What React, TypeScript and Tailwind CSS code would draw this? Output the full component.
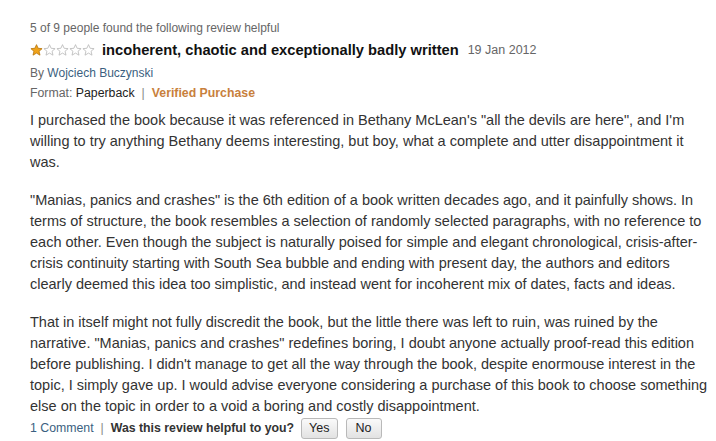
import React from 'react';

function Star({ filled }: { filled: boolean }) {
  return (
    <svg width="13" height="12" viewBox="0 0 24 23" className="block">
      <path
        d="M12 1.2l3.1 7 7.6.7-5.8 5 1.8 7.5L12 17.4l-6.7 4 1.8-7.5-5.8-5 7.6-.7z"
        fill={filled ? '#f0a31a' : '#fff'}
        stroke={filled ? '#b8770f' : '#b9b9b9'}
        strokeWidth="1.6"
        strokeLinejoin="round"
      />
    </svg>
  );
}

const paragraphs = [
  [
    'I purchased the book because it was referenced in Bethany McLean\'s "all the devils are here", and I\'m',
    'willing to try anything Bethany deems interesting, but boy, what a complete and utter disappointment it',
    'was.',
  ],
  [
    '"Manias, panics and crashes" is the 6th edition of a book written decades ago, and it painfully shows. In',
    'terms of structure, the book resembles a selection of randomly selected paragraphs, with no reference to',
    'each other. Even though the subject is naturally poised for simple and elegant chronological, crisis-after-',
    'crisis continuity starting with South Sea bubble and ending with present day, the authors and editors',
    'clearly deemed this idea too simplistic, and instead went for incoherent mix of dates, facts and ideas.',
  ],
  [
    'That in itself might not fully discredit the book, but the little there was left to ruin, was ruined by the',
    'narrative. "Manias, panics and crashes" redefines boring, I doubt anyone actually proof-read this edition',
    "before publishing. I didn't manage to get all the way through the book, despite enormouse interest in the",
    'topic, I simply gave up. I would advise everyone considering a purchase of this book to choose something',
    'else on the topic in order to a void a boring and costly disappointment.',
  ],
];

export default function App() {
  return (
    <div
      className="min-h-[441px] w-[716px] bg-white px-[30px] pt-[20px] text-[#333]"
      style={{ fontFamily: '"Liberation Sans", Arial, sans-serif' }}
    >
      <div className="text-[12px] leading-[16px] text-[#666]">5 of 9 people found the following review helpful</div>

      <div className="mt-[5px] flex items-center">
        <div className="flex">
          <Star filled />
          <Star filled={false} />
          <Star filled={false} />
          <Star filled={false} />
          <Star filled={false} />
        </div>
        <span className="ml-[7px] text-[14.7px] font-bold leading-[18px] text-[#111]">
          incoherent, chaotic and exceptionally badly written
        </span>
        <span className="ml-[9px] text-[12.5px] text-[#666]">19 Jan 2012</span>
      </div>

      <div className="mt-[5px] text-[12px] leading-[16px] text-[#666]">
        By <span className="text-[#3b5f80]">Wojciech Buczynski</span>
      </div>

      <div className="mt-[4px] text-[12.3px] leading-[16px] text-[#666]">
        Format: <span className="text-[#222]">Paperback</span>
        <span className="mx-[7px] text-[#888]">|</span>
        <span className="font-bold text-[#c8803c]">Verified Purchase</span>
      </div>

      <div className="mt-[9px] whitespace-nowrap text-[14.5px] leading-[21px] text-[#333]">
        {paragraphs.map((lines, i) => (
          <p key={i} className={i > 0 ? 'mt-[17px]' : ''}>
            {lines.map((line, j) => (
              <React.Fragment key={j}>
                {line}
                {j < lines.length - 1 && <br />}
              </React.Fragment>
            ))}
          </p>
        ))}
      </div>

      <div className="mt-[1px] flex items-center text-[12.3px]">
        <span className="text-[#3b5f80]">1 Comment</span>
        <span className="mx-[7px] text-[#888]">|</span>
        <span className="font-bold text-[#333]">Was this review helpful to you?</span>
        <button className="ml-[7px] h-[21px] rounded-[3px] border border-[#b9b9b9] bg-gradient-to-b from-[#fafafa] to-[#e2e2e2] px-[7px] text-[12.5px] text-[#222]">
          Yes
        </button>
        <button className="ml-[8px] h-[21px] rounded-[3px] border border-[#b9b9b9] bg-gradient-to-b from-[#fafafa] to-[#e2e2e2] px-[9px] text-[12.5px] text-[#222]">
          No
        </button>
      </div>
    </div>
  );
}
